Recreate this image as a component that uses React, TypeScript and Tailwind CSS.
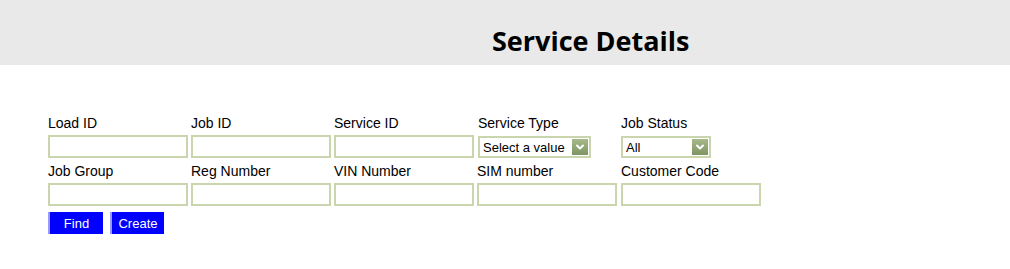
import { ChevronDown } from 'lucide-react';

const Field = ({ label }: { label: string }) => (
  <div className="flex flex-col">
    <label className="h-[22px] pt-[1px] leading-[18px]">{label}</label>
    <input
      type="text"
      className="w-[140px] h-[23px] border-2 border-[#c9d6ad] bg-white outline-none"
    />
  </div>
);

const Select = ({ label, value, width }: { label: string; value: string; width: string }) => (
  <div className="flex flex-col">
    <label className="h-[22px] pt-[1px] leading-[18px]">{label}</label>
    <div className={`${width} h-[22px] mt-[1px] border-2 border-[#c9d6ad] bg-white flex items-center justify-between pl-[3px] pr-[1px]`}>
      <span className="text-[13px] leading-none">{value}</span>
      <span className="w-[16px] h-[16px] bg-gradient-to-b from-[#a8b98a] to-[#7f9563] flex items-center justify-center">
        <ChevronDown size={12} strokeWidth={4} color="#ffffff" />
      </span>
    </div>
  </div>
);

export default function App() {
  return (
    <div className="w-[1010px] h-[269px] bg-white" style={{ fontFamily: '"Liberation Sans", Arial, sans-serif' }}>
      <div className="h-[65px] bg-[#e9e9e9] flex items-end pb-[11px] pl-[492px]">
        <h1 className="text-[27px] font-bold text-black leading-none" style={{ fontFamily: '"Open Sans", sans-serif' }}>
          Service Details
        </h1>
      </div>

      <div className="pl-[48px] pt-[48px] text-[14px] text-black">
        <div className="grid grid-cols-[143px_143px_143px_144px_143px]">
          <Field label="Load ID" />
          <Field label="Job ID" />
          <Field label="Service ID" />
          <div className="pl-[1px]">
            <Select label="Service Type" value="Select a value" width="w-[113px]" />
          </div>
          <Select label="Job Status" value="All" width="w-[90px]" />
        </div>
        <div className="grid grid-cols-[143px_143px_143px_144px_143px] mt-[3px]">
          <Field label="Job Group" />
          <Field label="Reg Number" />
          <Field label="VIN Number" />
          <Field label="SIM  number" />
          <Field label="Customer Code" />
        </div>
        <div className="flex gap-[7px] mt-[6px]">
          <button className="w-[55px] h-[22px] pt-[2px] bg-[#0000ff] text-white text-[13px] border-l-2 border-[#9999ff]">
            Find
          </button>
          <button className="w-[54px] h-[22px] pt-[2px] bg-[#0000ff] text-white text-[13px] border-l-2 border-[#9999ff]">
            Create
          </button>
        </div>
      </div>
    </div>
  );
}
